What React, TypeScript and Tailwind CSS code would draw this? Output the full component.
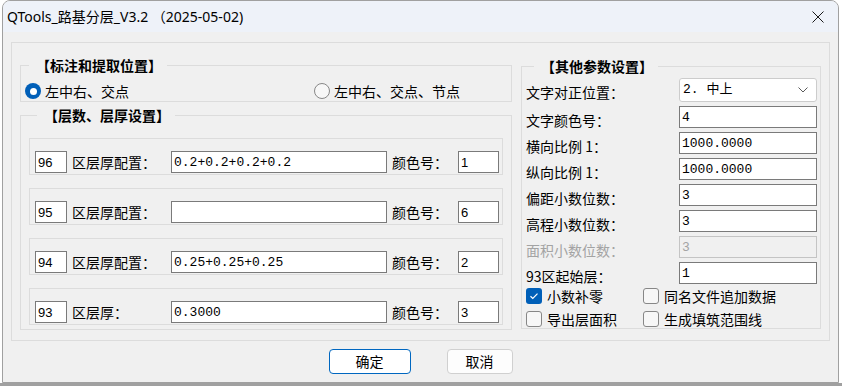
import React from "react";

const cjk = "font-['Noto_Sans_CJK_SC',sans-serif]";
const monoInput =
    "h-[22px] border border-[#7a7a7a] bg-white pl-[2px] p-0 text-[13px] text-black outline-none font-['Liberation_Mono','Noto_Sans_CJK_SC',monospace]";
const numInput =
    "h-[22px] border border-[#7a7a7a] bg-white pl-[2px] p-0 text-[13px] text-black outline-none font-['Liberation_Sans',sans-serif]";

interface GroupProps {
    title: string;
    className?: string;
    children: React.ReactNode;
}

const GroupBox: React.FC<GroupProps> = ({ title, className, children }) => {
    return (
        <fieldset className={"border border-[#dcdcdc] " + (className || "")}>
            <legend className="ml-[8px] pl-[7px] pr-[5px] text-[14px] leading-[20px] font-bold text-black">
                {title}
            </legend>
            {children}
        </fieldset>
    );
};

const Radio = ({ checked }: { checked: boolean }) => {
    if (checked) {
        return (
            <span className="w-[16px] h-[16px] rounded-full bg-[#005fb8] flex items-center justify-center shrink-0">
                <span className="w-[7px] h-[7px] rounded-full bg-white" />
            </span>
        );
    }
    return (
        <span className="w-[16px] h-[16px] rounded-full border border-[#878787] bg-[#f7f7f7] shrink-0" />
    );
};

const Check = ({ checked }: { checked: boolean }) => {
    if (checked) {
        return (
            <span className="w-[16px] h-[16px] rounded-[3px] bg-[#005fb8] flex items-center justify-center shrink-0">
                <svg width="12" height="12" viewBox="0 0 12 12">
                    <path
                        d="M2.5 6.3 L4.8 8.5 L9.5 3.6"
                        fill="none"
                        stroke="white"
                        strokeWidth="1.2"
                    />
                </svg>
            </span>
        );
    }
    return (
        <span className="w-[16px] h-[16px] rounded-[3px] border border-[#878787] bg-[#f7f7f7] shrink-0" />
    );
};

interface LayerRowProps {
    no: string;
    label: string;
    value: string;
    color: string;
}

const LayerRow: React.FC<LayerRowProps> = ({ no, label, value, color }) => {
    return (
        <div className="h-[37px] border border-[#dcdcdc] flex items-end pl-[5px] pb-[1px]">
            <input readOnly value={no} className={"w-[32px] " + numInput} />
            <span className="ml-[5px] w-[99px] leading-[22px]">{label}</span>
            <input readOnly value={value} className={"w-[216px] pl-[1px] " + monoInput} />
            <span className="ml-[5px] w-[66px] leading-[22px]">颜色号：</span>
            <input readOnly value={color} className={"w-[41px] " + numInput} />
        </div>
    );
};

interface ParamRowProps {
    label: string;
    value: string;
    disabled?: boolean;
}

const ParamRow: React.FC<ParamRowProps> = ({ label, value, disabled }) => {
    return (
        <div className="flex h-[22px]">
            <span
                className={
                    "flex-1 pt-[7px] leading-[14px] whitespace-nowrap " +
                    (disabled ? "text-[#a3a3a3]" : "text-black")
                }
            >
                {label}
            </span>
            {disabled ? (
                <input
                    readOnly
                    value={value}
                    className="w-[138px] h-[22px] border border-[#c4c4c4] bg-[#f0f0f0] pl-[2px] p-0 text-[13px] text-[#a3a3a3] outline-none font-['Liberation_Mono',monospace]"
                />
            ) : (
                <input readOnly value={value} className={"w-[138px] " + monoInput} />
            )}
        </div>
    );
};

export default function App() {
    return (
        <div className={"w-[842px] h-[386px] bg-white overflow-hidden text-[14px] text-black " + cjk}>
            <div className="ml-[2px] w-[837px] h-[383px] border border-[#a0a0a0] rounded-t-[8px] bg-[#f0f0f0] flex flex-col overflow-hidden">
                {/* title bar */}
                <div className="h-[31px] bg-[#eef2f9] flex items-center justify-between pl-[4px] pr-[14px] shrink-0">
                    <span className="text-[14px] font-['Noto_Sans','Noto_Sans_CJK_SC',sans-serif] text-black">
                        QTools_路基分层_V3.2 （2025-05-02)
                    </span>
                    <svg width="12" height="12" viewBox="0 0 12 12">
                        <path d="M0.5 0.5 L11.5 11.5 M11.5 0.5 L0.5 11.5" stroke="#1a1a1a" strokeWidth="1" />
                    </svg>
                </div>

                {/* outer panel */}
                <div className="mt-[10px] ml-[8px] w-[819px] h-[299px] border border-[#dcdcdc] flex gap-[9px] px-[8px] pt-[12px]">
                    <div className="w-[492px] flex flex-col gap-[3px]">
                        <GroupBox title="【标注和提取位置】" className="pt-[6px]">
                            <div className="h-[20px] flex items-center pl-[4px]">
                                <div className="w-[289px] flex items-center gap-[4px]">
                                    <Radio checked />
                                    <span>左中右、交点</span>
                                </div>
                                <div className="flex items-center gap-[4px]">
                                    <Radio checked={false} />
                                    <span>左中右、交点、节点</span>
                                </div>
                            </div>
                        </GroupBox>
                        <GroupBox title="【层数、层厚设置】" className="pt-[13px] pb-[4px] px-[8px]">
                            <div className="flex flex-col gap-[13px]">
                                <LayerRow no="96" label="区层厚配置：" value="0.2+0.2+0.2+0.2" color="1" />
                                <LayerRow no="95" label="区层厚配置：" value="" color="6" />
                                <LayerRow no="94" label="区层厚配置：" value="0.25+0.25+0.25" color="2" />
                                <LayerRow no="93" label="区层厚：" value="0.3000" color="3" />
                            </div>
                        </GroupBox>
                    </div>

                    <GroupBox title="【其他参数设置】" className="w-[300px] h-[273px] mt-[1px] pt-[2px] pl-[4px] pr-[3px]">
                        <div className="flex flex-col gap-[4px]">
                            <div className="flex h-[24px]">
                                <span className="flex-1 pt-[7px] leading-[14px]">文字对正位置：</span>
                                <div className="w-[138px] h-[24px] border border-[#cccccc] rounded-[3px] bg-white flex items-center justify-between pl-[3px] pr-[8px] text-[13px] font-['Liberation_Mono','Noto_Sans_CJK_SC',monospace]">
                                    <span>2. 中上</span>
                                    <svg width="10" height="6" viewBox="0 0 10 6">
                                        <path d="M0.5 0.5 L5 5 L9.5 0.5" fill="none" stroke="#5a5a5a" strokeWidth="1" />
                                    </svg>
                                </div>
                            </div>
                            <ParamRow label="文字颜色号：" value="4" />
                            <ParamRow label="横向比例 1：" value="1000.0000" />
                            <ParamRow label="纵向比例 1：" value="1000.0000" />
                            <ParamRow label="偏距小数位数：" value="3" />
                            <ParamRow label="高程小数位数：" value="3" />
                            <ParamRow label="面积小数位数：" value="3" disabled />
                            <ParamRow label="93区起始层：" value="1" />
                        </div>
                        <div className="mt-[2px] flex flex-col gap-[3px]">
                            <div className="h-[20px] flex items-center">
                                <div className="w-[117px] flex items-center gap-[5px]">
                                    <Check checked />
                                    <span>小数补零</span>
                                </div>
                                <div className="flex items-center gap-[5px]">
                                    <Check checked={false} />
                                    <span>同名文件追加数据</span>
                                </div>
                            </div>
                            <div className="h-[20px] flex items-center">
                                <div className="w-[117px] flex items-center gap-[5px]">
                                    <Check checked={false} />
                                    <span>导出层面积</span>
                                </div>
                                <div className="flex items-center gap-[5px]">
                                    <Check checked={false} />
                                    <span>生成填筑范围线</span>
                                </div>
                            </div>
                        </div>
                    </GroupBox>
                </div>

                {/* buttons */}
                <div className="mt-[8px] flex justify-center gap-[36px]">
                    <button className="w-[82px] h-[25px] border border-[#0067c0] rounded-[4px] bg-white text-[14px]">
                        确定
                    </button>
                    <button className="w-[66px] h-[25px] border border-[#d0d0d0] rounded-[4px] bg-[#fdfdfd] text-[14px]">
                        取消
                    </button>
                </div>
            </div>
            <div className="h-[3px] bg-[#a0a0a0]" />
        </div>
    );
}
